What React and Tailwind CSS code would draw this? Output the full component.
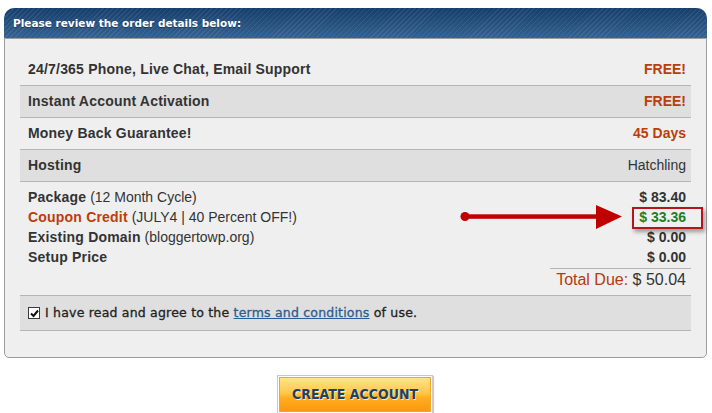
import React from 'react';

const arial = "font-['Liberation_Sans',Arial,sans-serif]";
const verdana = "font-['DejaVu_Sans',Verdana,sans-serif]";

const features = [
  { label: '24/7/365 Phone, Live Chat, Email Support', value: 'FREE!', accent: true },
  { label: 'Instant Account Activation', value: 'FREE!', accent: true, shaded: true },
  { label: 'Money Back Guarantee!', value: '45 Days', accent: true },
  { label: 'Hosting', value: 'Hatchling', shaded: true },
];

const charges = [
  { label: 'Package', note: '(12 Month Cycle)', price: '$ 83.40' },
  { label: 'Coupon Credit', note: '(JULY4 | 40 Percent OFF!)', price: '$ 33.36', coupon: true },
  { label: 'Existing Domain', note: '(bloggertowp.org)', price: '$ 0.00' },
  { label: 'Setup Price', price: '$ 0.00' },
];

function FeatureRow({ label, value, accent, shaded }) {
  return (
    <div
      className={`flex items-center justify-between h-[32px] pl-2 pr-[5px] border-b border-[#b5b5b5] ${
        shaded ? 'bg-[#dfdfdf]' : ''
      }`}
    >
      <span className={`${arial} font-bold text-[14px] tracking-[0.2px] text-[#333]`}>{label}</span>
      {accent ? (
        <span className={`${arial} font-bold text-[14px] text-[#bb3d0c]`}>{value}</span>
      ) : (
        <span className={`${arial} text-[14px] text-[#333]`}>{value}</span>
      )}
    </div>
  );
}

export default function App() {
  return (
    <div className="relative w-[712px] h-[413px] overflow-hidden bg-white pt-2">
      <div className="ml-1 w-[703px]">
        {/* header bar */}
        <div className="h-[30px] rounded-t-[10px] flex items-center pl-[9px] pt-[2px] bg-[image:repeating-linear-gradient(135deg,rgba(255,255,255,0.08)_0px,rgba(255,255,255,0.08)_1px,transparent_1px,transparent_3.5px),linear-gradient(180deg,#153e6c,#36618e)]">
          <span className={`${verdana} font-bold text-[10.5px] text-white [text-shadow:0_1px_0_rgba(0,0,0,0.35)]`}>
            Please review the order details below:
          </span>
        </div>

        <div className="border border-[#9d9d9d] rounded-b-[5px] bg-[#efefef] px-[15px] pt-[15px] pb-[26px]">
          {features.map((f) => (
            <FeatureRow key={f.label} {...f} />
          ))}

          {/* charges */}
          <div className="pt-[5px] pb-[5px] border-b border-[#b5b5b5]">
            {charges.map((c) => (
              <div key={c.label} className="flex items-center justify-between h-[20px] pl-2 pr-[5px]">
                <span className={`${arial} text-[14px] text-[#333]`}>
                  <span className={`font-bold tracking-[0.2px] ${c.coupon ? 'text-[#bb3d0c]' : ''}`}>{c.label}</span>
                  {c.note && <span> {c.note}</span>}
                </span>
                <span
                  className={`${arial} font-bold text-[14px] ${c.coupon ? 'text-[#1f7f1f]' : 'text-[#333]'}`}
                >
                  {c.price}
                </span>
              </div>
            ))}
            <div className="ml-auto mt-[1px] w-[141px] border-t border-[#b5b5b5] h-[22px] flex items-center justify-end pr-[5px]">
              <span className={`${arial} text-[16px] text-[#333]`}>
                <span className="text-[#b53a0a]">Total Due:</span> $ 50.04
              </span>
            </div>
          </div>

          {/* terms */}
          <div className="flex items-center h-[35px] pl-2 bg-[#dfdfdf] border-b border-[#b5b5b5]">
            <span className="w-[12px] h-[12px] border border-[#3a3a3a] bg-white flex items-center justify-center">
              <svg width="9" height="9" viewBox="0 0 9 9">
                <path d="M1 4.5 L3.5 7 L8 1.5" fill="none" stroke="#111" strokeWidth="2" />
              </svg>
            </span>
            <span
              className={`${verdana} ml-[5px] text-[12.5px] tracking-[0.2px] text-[#222] [-webkit-text-stroke:0.3px_#222]`}
            >
              I have read and agree to the{' '}
              <span className="text-[#2c5c95] underline [-webkit-text-stroke:0.3px_#2c5c95]">terms and conditions</span>{' '}
              of use.
            </span>
          </div>
        </div>
      </div>

      {/* button */}
      <div className="flex justify-center mt-[17px]">
        <div className="ml-[-2px] p-[1px] bg-white border border-[#c9c9c9] shadow-[1px_1px_1px_rgba(0,0,0,0.2)]">
          <div className="w-[152px] h-[35px] flex items-center justify-center border border-[#f2a628] bg-[linear-gradient(180deg,#ffe48c_0%,#ffc84a_45%,#ffae1e_60%,#fb9812_100%)]">
            <span className="font-['DejaVu_Sans_Condensed','Liberation_Sans_Narrow','Liberation_Sans',sans-serif] font-bold text-[14px] text-[#22405f] [text-shadow:1px_1px_0_rgba(255,245,210,0.9)]">
              CREATE ACCOUNT
            </span>
          </div>
        </div>
      </div>

      {/* annotation arrow */}
      <svg className="absolute left-[458px] top-[203px]" width="168" height="28" viewBox="0 0 168 28">
        <circle cx="7" cy="13.5" r="4.5" fill="#c00000" />
        <rect x="7" y="11.3" width="133" height="4.5" fill="#c00000" />
        <polygon points="138,2 164,13.5 138,26" fill="#c00000" />
      </svg>
      {/* highlight box */}
      <div className="absolute left-[632px] top-[207px] w-[71px] h-[22px] border-2 border-[#b0161a] shadow-[2px_3px_4px_rgba(0,0,0,0.35)]" />
    </div>
  );
}
